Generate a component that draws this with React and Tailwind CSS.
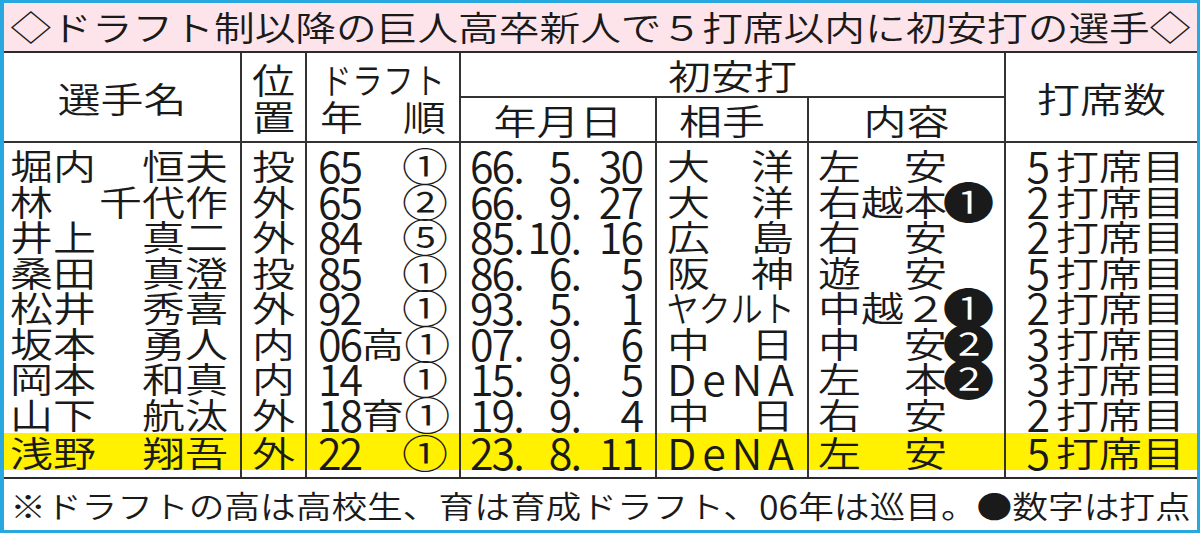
import React from 'react';

const J = ({ children, className = '' }) => (
  <span className={`inline-block whitespace-nowrap scale-y-[0.83] ${className}`}>{children}</span>
);

const rows = [
  { f: '堀内', g: '恒夫', pos: '投', dy: '65', dk: '', dr: '①', date: ['66', '5', '30'], opp: ['大', '洋'], c: ['左', '', '安', ''], pa: '5' },
  { f: '林', g: '千代作', pos: '外', dy: '65', dk: '', dr: '②', date: ['66', '9', '27'], opp: ['大', '洋'], c: ['右', '越', '本', '❶'], pa: '2' },
  { f: '井上', g: '真二', pos: '外', dy: '84', dk: '', dr: '⑤', date: ['85', '10', '16'], opp: ['広', '島'], c: ['右', '', '安', ''], pa: '2' },
  { f: '桑田', g: '真澄', pos: '投', dy: '85', dk: '', dr: '①', date: ['86', '6', '5'], opp: ['阪', '神'], c: ['遊', '', '安', ''], pa: '5' },
  { f: '松井', g: '秀喜', pos: '外', dy: '92', dk: '', dr: '①', date: ['93', '5', '1'], opp: ['ヤ', 'ク', 'ル', 'ト'], c: ['中', '越', '２', '❶'], pa: '2' },
  { f: '坂本', g: '勇人', pos: '内', dy: '06', dk: '高', dr: '①', date: ['07', '9', '6'], opp: ['中', '日'], c: ['中', '', '安', '❷'], pa: '3' },
  { f: '岡本', g: '和真', pos: '内', dy: '14', dk: '', dr: '①', date: ['15', '9', '5'], opp: ['D', 'e', 'N', 'A'], c: ['左', '', '本', '❷'], pa: '3' },
  { f: '山下', g: '航汰', pos: '外', dy: '18', dk: '育', dr: '①', date: ['19', '9', '4'], opp: ['中', '日'], c: ['右', '', '安', ''], pa: '2' },
  { f: '浅野', g: '翔吾', pos: '外', dy: '22', dk: '', dr: '①', date: ['23', '8', '11'], opp: ['D', 'e', 'N', 'A'], c: ['左', '', '安', ''], pa: '5', hl: true },
];

const isLatin = (s) => /^[A-Za-z0-9]$/.test(s);
const isKana = (s) => /^[\u30A0-\u30FF]$/.test(s);
const isDing = (s) => /^[\u2776-\u277F]$/.test(s);

function Cell({ hl, className = '', children }) {
  return (
    <div
      className={`${hl ? 'mt-[2px] h-[37px] bg-[#fff100]' : 'h-[35.5px]'} flex items-center leading-[35px] ${className}`}
    >
      {children}
    </div>
  );
}

function Col({ first, children }) {
  return (
    <div className={`flex flex-col pt-[4px] pb-[7px] ${first ? '' : 'border-l-2 border-[#333]'}`}>
      {children}
    </div>
  );
}

export default function App() {
  return (
    <div className="w-[1200px] h-[533px] bg-[#29a8df] pt-[3px] pb-[3px] pl-[4px] pr-[3px] font-['Noto_Sans_CJK_JP','Noto_Sans',sans-serif] font-[350] text-[#1a1a1a]">
      <div className="w-full h-full bg-white flex flex-col overflow-hidden">
        {/* Title */}
        <div className="h-[50px] shrink-0 bg-[#fde4ea] border-b-2 border-[#2b2b2b] flex items-center justify-center text-[40.7px] leading-[48px] whitespace-nowrap">
          <J className="scale-y-[0.8]">◇ドラフト制以降の巨人高卒新人で５打席以内に初安打の選手◇</J>
        </div>

        {/* Header */}
        <div className="h-[90px] shrink-0 grid grid-cols-[236px_65px_154px_196px_152px_197px_193px] grid-rows-[45px_43px] border-b-2 border-[#333] text-[43px] leading-[37px]">
          <div className="row-span-2 flex items-center justify-center">
            <J>選手名</J>
          </div>
          <div className="row-span-2 border-l-2 border-[#333] flex flex-col items-center justify-center">
            <J>位</J>
            <J>置</J>
          </div>
          <div className="row-span-2 border-l-2 border-[#333] flex flex-col justify-center px-[13px]">
            <div className="flex justify-center">
              <J className="scale-x-[0.72]">ドラフト</J>
            </div>
            <div className="flex justify-between">
              <J>年</J>
              <J>順</J>
            </div>
          </div>
          <div className="col-span-3 border-l-2 border-b-2 border-[#333] flex items-center justify-center">
            <J>初安打</J>
          </div>
          <div className="row-span-2 border-l-2 border-[#333] flex items-center justify-center">
            <J>打席数</J>
          </div>
          <div className="border-l-2 border-[#333] flex items-center justify-center">
            <J>年月日</J>
          </div>
          <div className="border-l-2 border-[#333] flex items-center justify-center pr-[20px]">
            <J>相手</J>
          </div>
          <div className="border-l-2 border-[#333] flex items-center justify-center">
            <J>内容</J>
          </div>
        </div>

        {/* Body */}
        <div className="flex-1 grid grid-cols-[236px_65px_154px_196px_152px_197px_193px] text-[43px]">
          <Col first>
            {rows.map((r, i) => (
              <Cell key={i} hl={r.hl} className="justify-between pl-[6px] pr-[12px]">
                <J>{r.f}</J>
                <J>{r.g}</J>
              </Cell>
            ))}
          </Col>
          <Col>
            {rows.map((r, i) => (
              <Cell key={i} hl={r.hl} className="justify-center">
                <J>{r.pos}</J>
              </Cell>
            ))}
          </Col>
          <Col>
            {rows.map((r, i) => (
              <Cell key={i} hl={r.hl} className="justify-between pl-[11px] pr-[11px]">
                <span className="flex items-center">
                  <span className="tracking-[-2px]">{r.dy}</span>
                  {r.dk ? <J>{r.dk}</J> : null}
                </span>
                <J className="text-[46px] scale-y-[0.78]">{r.dr}</J>
              </Cell>
            ))}
          </Col>
          <Col>
            {rows.map((r, i) => (
              <Cell key={i} hl={r.hl} className="pl-[9px] tracking-[-2px]">
                <span className="w-[50px] whitespace-nowrap">{r.date[0]}.</span>
                <span className="w-[60px] text-right">{r.date[1]}.</span>
                <span className="w-[62px] text-right">{r.date[2]}</span>
              </Cell>
            ))}
          </Col>
          <Col>
            {rows.map((r, i) => (
              <Cell key={i} hl={r.hl} className="justify-between pl-[10px] pr-[13px]">
                {r.opp.map((ch, j) =>
                  isLatin(ch) ? (
                    <span key={j}>{ch}</span>
                  ) : isKana(ch) ? (
                    <span key={j} className="w-[30px] flex justify-center">
                      <J className="scale-x-[0.75]">{ch}</J>
                    </span>
                  ) : (
                    <J key={j}>{ch}</J>
                  )
                )}
              </Cell>
            ))}
          </Col>
          <Col>
            {rows.map((r, i) => (
              <Cell key={i} hl={r.hl} className="pl-[9px]">
                {r.c.map((ch, j) => (
                  <span key={j} className="w-[43px] flex justify-center">
                    {ch ? (
                      isDing(ch) ? (
                        <J className="text-[52px] scale-y-[0.7]">{ch}</J>
                      ) : (
                        <J>{ch}</J>
                      )
                    ) : null}
                  </span>
                ))}
              </Cell>
            ))}
          </Col>
          <Col>
            {rows.map((r, i) => (
              <Cell key={i} hl={r.hl} className="justify-end pr-[12px]">
                <span className="mr-[6px]">{r.pa}</span>
                <J>打席目</J>
              </Cell>
            ))}
          </Col>
        </div>

        {/* Footer */}
        <div className="h-[53px] shrink-0 border-t-2 border-[#2b2b2b] flex items-center justify-center text-[35.7px] leading-[40px] whitespace-nowrap">
          <J className="scale-y-[0.85]">※ドラフトの高は高校生、育は育成ドラフト、</J>
          <span>06</span>
          <J className="scale-y-[0.85]">年は巡目。●数字は打点</J>
        </div>
      </div>
    </div>
  );
}
